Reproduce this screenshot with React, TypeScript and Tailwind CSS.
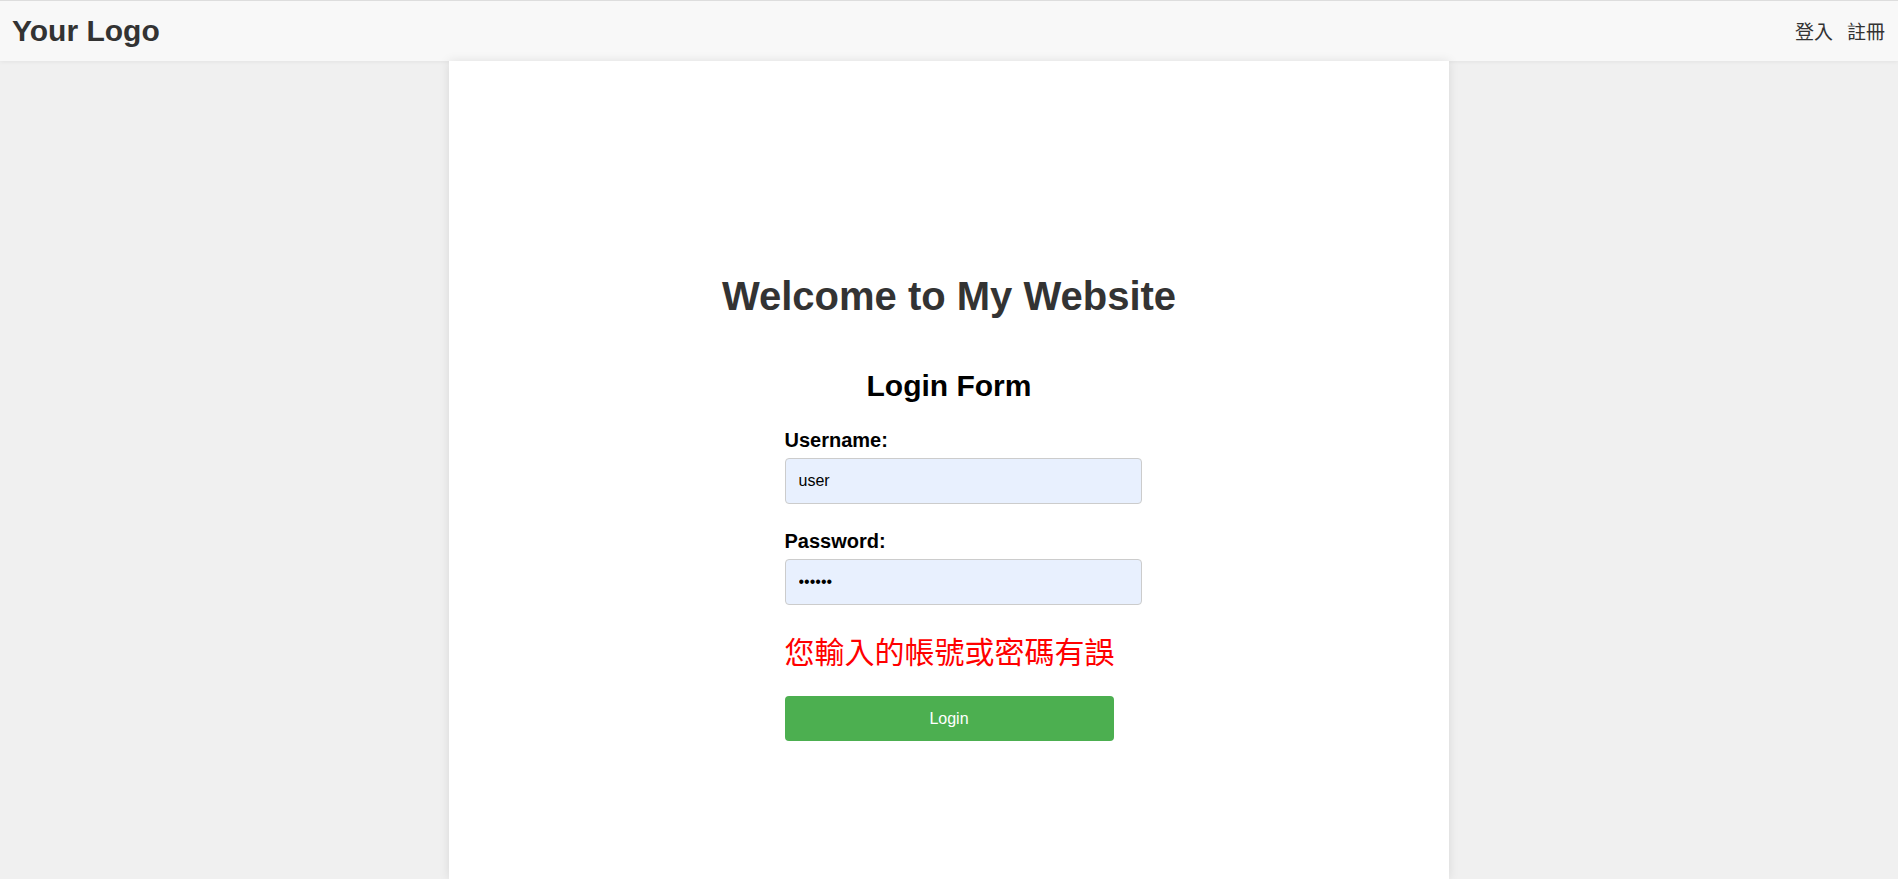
export default function App() {
  return (
    <div className="min-h-screen bg-[#f0f0f0] font-['Liberation_Sans','Noto_Sans_CJK_TC',sans-serif]">
      <header className="flex h-[61px] items-center justify-between border-t border-[#dddddd] bg-[#f8f8f8] px-3 shadow-[0_1px_4px_rgba(0,0,0,0.06)]">
        <div className="text-[30px] font-bold leading-none text-[#333333]">Your Logo</div>
        <nav className="flex gap-[14px] pr-[1px] text-[19px] text-[#333333] font-['Noto_Sans_CJK_TC',sans-serif]">
          <a href="#">登入</a>
          <a href="#">註冊</a>
        </nav>
      </header>

      <main className="mx-auto flex min-h-[818px] w-[1000px] flex-col items-center bg-white pt-[212px] shadow-[0_0_10px_rgba(0,0,0,0.1)]">
        <h1 className="text-[40px] font-bold leading-[46px] text-[#333333]">Welcome to My Website</h1>

        <h2 className="mt-[50px] text-[30px] font-bold leading-[34px] text-black">Login Form</h2>

        <form className="mt-[25px] flex w-[329px] flex-col">
          <label className="text-[20px] font-bold leading-[24px] text-black">Username:</label>
          <input
            type="text"
            defaultValue="user"
            className="mt-[6px] h-[46px] w-[357px] rounded-[4px] border border-[#cccccc] bg-[#e8f0fe] pl-[13px] text-[16px] text-black outline-none"
          />

          <label className="mt-[25px] text-[20px] font-bold leading-[24px] text-black">Password:</label>
          <input
            type="password"
            defaultValue="123456"
            className="mt-[6px] h-[46px] w-[357px] rounded-[4px] border border-[#cccccc] bg-[#e8f0fe] pl-[13px] text-[16px] text-black outline-none"
          />

          <p className="mt-[27px] whitespace-nowrap text-[30px] leading-[36px] text-[#ff0000] font-['Noto_Sans_CJK_TC',sans-serif]">
            您輸入的帳號或密碼有誤
          </p>

          <button
            type="button"
            className="mt-[28px] h-[45px] w-full rounded-[4px] bg-[#4caf50] text-[16px] text-white"
          >
            Login
          </button>
        </form>
      </main>
    </div>
  );
}
